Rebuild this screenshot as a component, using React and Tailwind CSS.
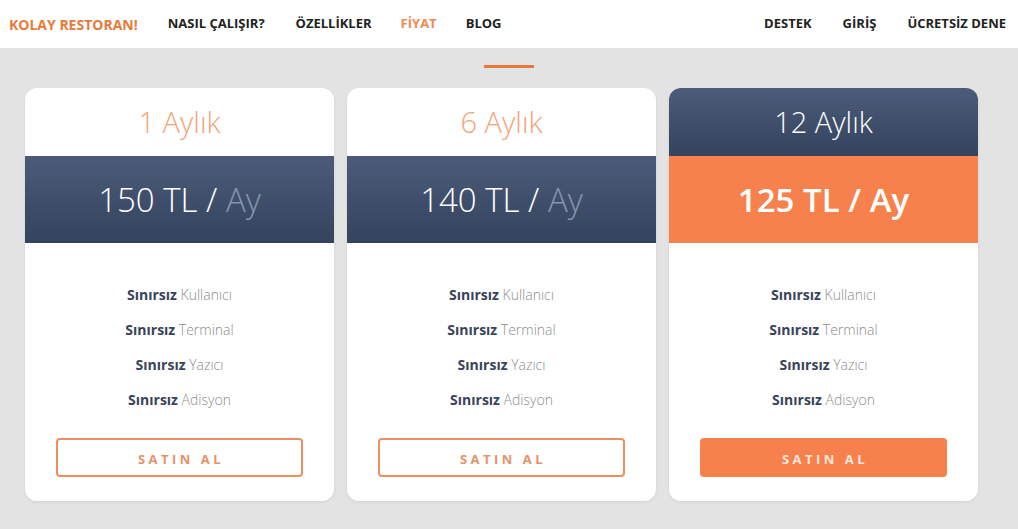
const plans = [
  { title: "1 Aylık", price: "150", featured: false },
  { title: "6 Aylık", price: "140", featured: false },
  { title: "12 Aylık", price: "125", featured: true },
];

const features = ["Kullanıcı", "Terminal", "Yazıcı", "Adisyon"];

const PlanCard = ({ plan }) => (
  <div className="w-[309px] h-[413px] bg-white rounded-[12px] overflow-hidden flex flex-col shadow-[0_1px_3px_rgba(0,0,0,0.08)]">
    {/* Header */}
    <div
      className={`h-[68px] flex items-center justify-center text-[29px] font-light ${
        plan.featured
          ? "bg-gradient-to-b from-[#4b5b79] to-[#34445e] text-white"
          : "text-[#f3a37a]"
      }`}
    >
      {plan.title}
    </div>

    {/* Price */}
    <div
      className={`h-[87px] flex items-center justify-center text-[33px] ${
        plan.featured
          ? "bg-[#f6814c] text-white font-semibold"
          : "bg-gradient-to-b from-[#4b5b79] to-[#34445e] text-white font-light"
      }`}
    >
      <span>
        {plan.price} TL /{" "}
        <span className={plan.featured ? "" : "text-[#8694ad]"}>Ay</span>
      </span>
    </div>

    {/* Features */}
    <div className="flex flex-col items-center pt-[41px] gap-[14px] text-[14px] leading-[21px]">
      {features.map((f) => (
        <div key={f}>
          <span className="font-bold text-[#39435a]">Sınırsız</span>{" "}
          <span className="font-light text-[#8d8d8d]">{f}</span>
        </div>
      ))}
    </div>

    {/* Button */}
    <div className="flex justify-center pt-[28px]">
      <button
        className={`w-[247px] h-[39px] rounded-[4px] text-[13px] font-bold tracking-[3.5px] pl-[3px] pt-[4px] ${
          plan.featured
            ? "bg-[#f6814c] text-[#fde6dc]"
            : "border-2 border-[#ec8d62] text-[#e5926a]"
        }`}
      >
        SATIN AL
      </button>
    </div>
  </div>
);

export default function App() {
  return (
    <div className="w-[1018px] h-[529px] bg-[#e3e3e3] font-['Open_Sans',sans-serif] overflow-hidden">
      {/* Navbar */}
      <nav className="h-[48px] bg-white flex items-center justify-between pl-[9px] pr-[12px] text-[13px] font-bold text-[#222]">
        <div className="flex items-center">
          <span className="text-[14px] text-[#e8793a] mr-[30px]">KOLAY RESTORAN!</span>
          <span className="mr-[31px]">NASIL ÇALIŞIR?</span>
          <span className="mr-[29px]">ÖZELLİKLER</span>
          <span className="mr-[29px] text-[#f08a4f]">FİYAT</span>
          <span>BLOG</span>
        </div>
        <div className="flex items-center gap-[31px]">
          <span>DESTEK</span>
          <span>GİRİŞ</span>
          <span>ÜCRETSİZ DENE</span>
        </div>
      </nav>

      {/* Pricing */}
      <section className="pt-[17px]">
        <div className="mx-auto w-[50px] h-[3px] bg-[#e8793a]" />
        <div className="flex gap-[13px] pl-[25px] pt-[20px]">
          {plans.map((p) => (
            <PlanCard key={p.title} plan={p} />
          ))}
        </div>
      </section>
    </div>
  );
}
